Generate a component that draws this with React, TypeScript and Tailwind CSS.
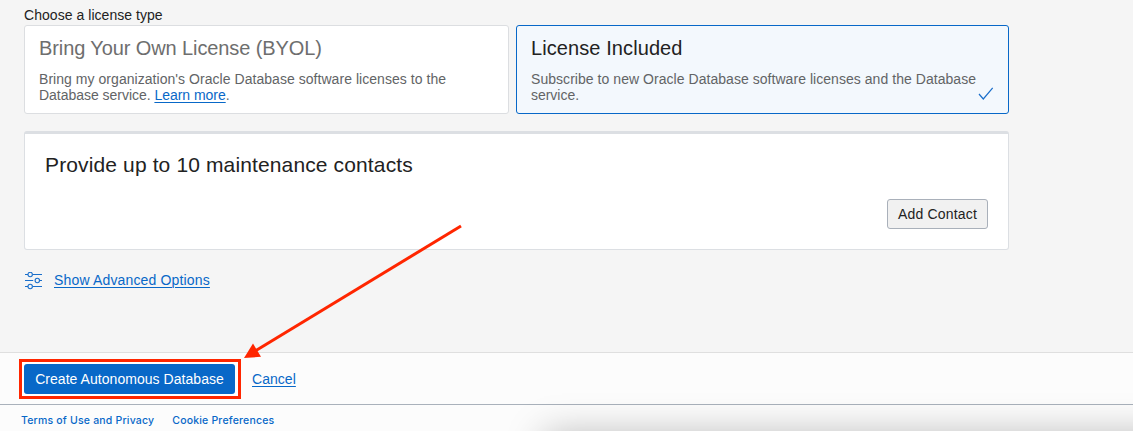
const link = "text-[#0868c8] underline underline-offset-[2px] decoration-1";

function SlidersIcon() {
  return (
    <svg className="block h-[18px] w-[18px]" viewBox="0 0 18 18" fill="none" stroke="#1a6fcb" strokeWidth="1.1">
      <path d="M0 2.5H3M8 2.5H17M0 8.5H8.2M15 8.5H17M0 14.5H3M8 14.5H17" />
      <circle cx="5.2" cy="2.5" r="2.2" />
      <circle cx="12.3" cy="8.5" r="2.2" />
      <circle cx="5.2" cy="14.5" r="2.2" />
    </svg>
  );
}

export default function App() {
  return (
    <div className="relative flex h-[431px] w-[1133px] flex-col overflow-hidden bg-[#f5f5f5] font-['Liberation_Sans',Arial,sans-serif] text-[14px] tracking-[0.045px] text-[#222]">
      <main className="h-[352px] w-[1009px] pl-6">
        <div className="h-[25px] pt-[7px] leading-4">Choose a license type</div>
        <div className="flex gap-[7px]">
          <section className="h-[89px] w-[485px] rounded-[3px] border border-[#dcdee1] bg-white px-[14px] pt-[10px]">
            <h2 className="text-[20px] leading-6 tracking-[-0.1px] text-[#6e6e6e]">Bring Your Own License (BYOL)</h2>
            <p className="mt-[11px] leading-4 text-[#626466]">
              Bring my organization's Oracle Database software licenses to the
              <br />
              <span className="tracking-[-0.03px]">
                Database service. <a className={link}>Learn more</a>.
              </span>
            </p>
          </section>
          <section className="relative h-[89px] w-[493px] rounded-[3px] border border-[#0868c8] bg-[#f3f8fd] px-[14px] pt-[10px]">
            <h2 className="text-[20px] leading-6 tracking-[0.09px]">License Included</h2>
            <p className="mt-[11px] leading-4 whitespace-nowrap text-[#626466]">
              Subscribe to new Oracle Database software licenses and the Database
              <br />
              <span className="tracking-[-0.03px]">service.</span>
            </p>
            <svg className="absolute right-[14px] bottom-[12px] h-[14px] w-4" viewBox="0 0 16 14" fill="none" stroke="#1a6fcb" strokeWidth="1.2">
              <path d="M1 7L5.3 12L14.7 0.8" />
            </svg>
          </section>
        </div>
        <section className="mt-[17px] flex h-[119px] flex-col rounded-[3px] border border-t-[3px] border-[#dcdfe3] bg-white px-5 pt-[18px]">
          <h2 className="text-[21px] leading-[26px] tracking-[0.13px]">Provide up to 10 maintenance contacts</h2>
          <button className="mt-[21px] h-[30px] w-[101px] self-end rounded-[3px] border border-[#a9b0ba] bg-[#f1f1f1] text-center leading-[28px] tracking-[0.2px]">Add Contact</button>
        </section>
        <div className="mt-[20px] flex items-center gap-3 pl-px">
          <SlidersIcon />
          <a className={`${link} -ml-px tracking-[0.16px]`}>Show Advanced Options</a>
        </div>
      </main>
      <div className="flex h-[53px] shrink-0 items-start border-t border-b border-t-[#dfdfdf] border-b-[#a9b1bb] bg-[#fcfcfc] pt-[6px] pl-[19px]">
        <div className="h-10 w-[222px] border-3 border-[#ff2600] bg-white p-[2px]">
          <button className="block h-[30px] w-[211px] rounded-[3px] bg-[#0868c8] text-center leading-[30px] text-white">Create Autonomous Database</button>
        </div>
        <a className={`${link} ml-[11px] leading-[41px]`}>Cancel</a>
      </div>
      <footer className="relative flex flex-1 gap-[18px] bg-[#fcfcfc] pt-[8px] pl-[21px] font-[Inter,sans-serif] text-[10.5px] leading-4 font-medium tracking-[0.19px] text-[#0868c8]">
        <a>Terms of Use and Privacy</a>
        <a>Cookie Preferences</a>
      </footer>
      <div className="absolute top-[434px] left-[544px] h-[200px] w-[700px] shadow-[0_0_36px_rgba(0,0,0,0.27)]" />
      <svg className="absolute top-0 left-0 h-[431px] w-[1133px]" viewBox="0 0 1133 431" fill="none">
        <path d="M461 226L256 350.5" stroke="#ff2600" strokeWidth="3" />
        <path d="M244 358L253 343.5L261 356.8Z" fill="#ff2600" />
      </svg>
    </div>
  );
}
